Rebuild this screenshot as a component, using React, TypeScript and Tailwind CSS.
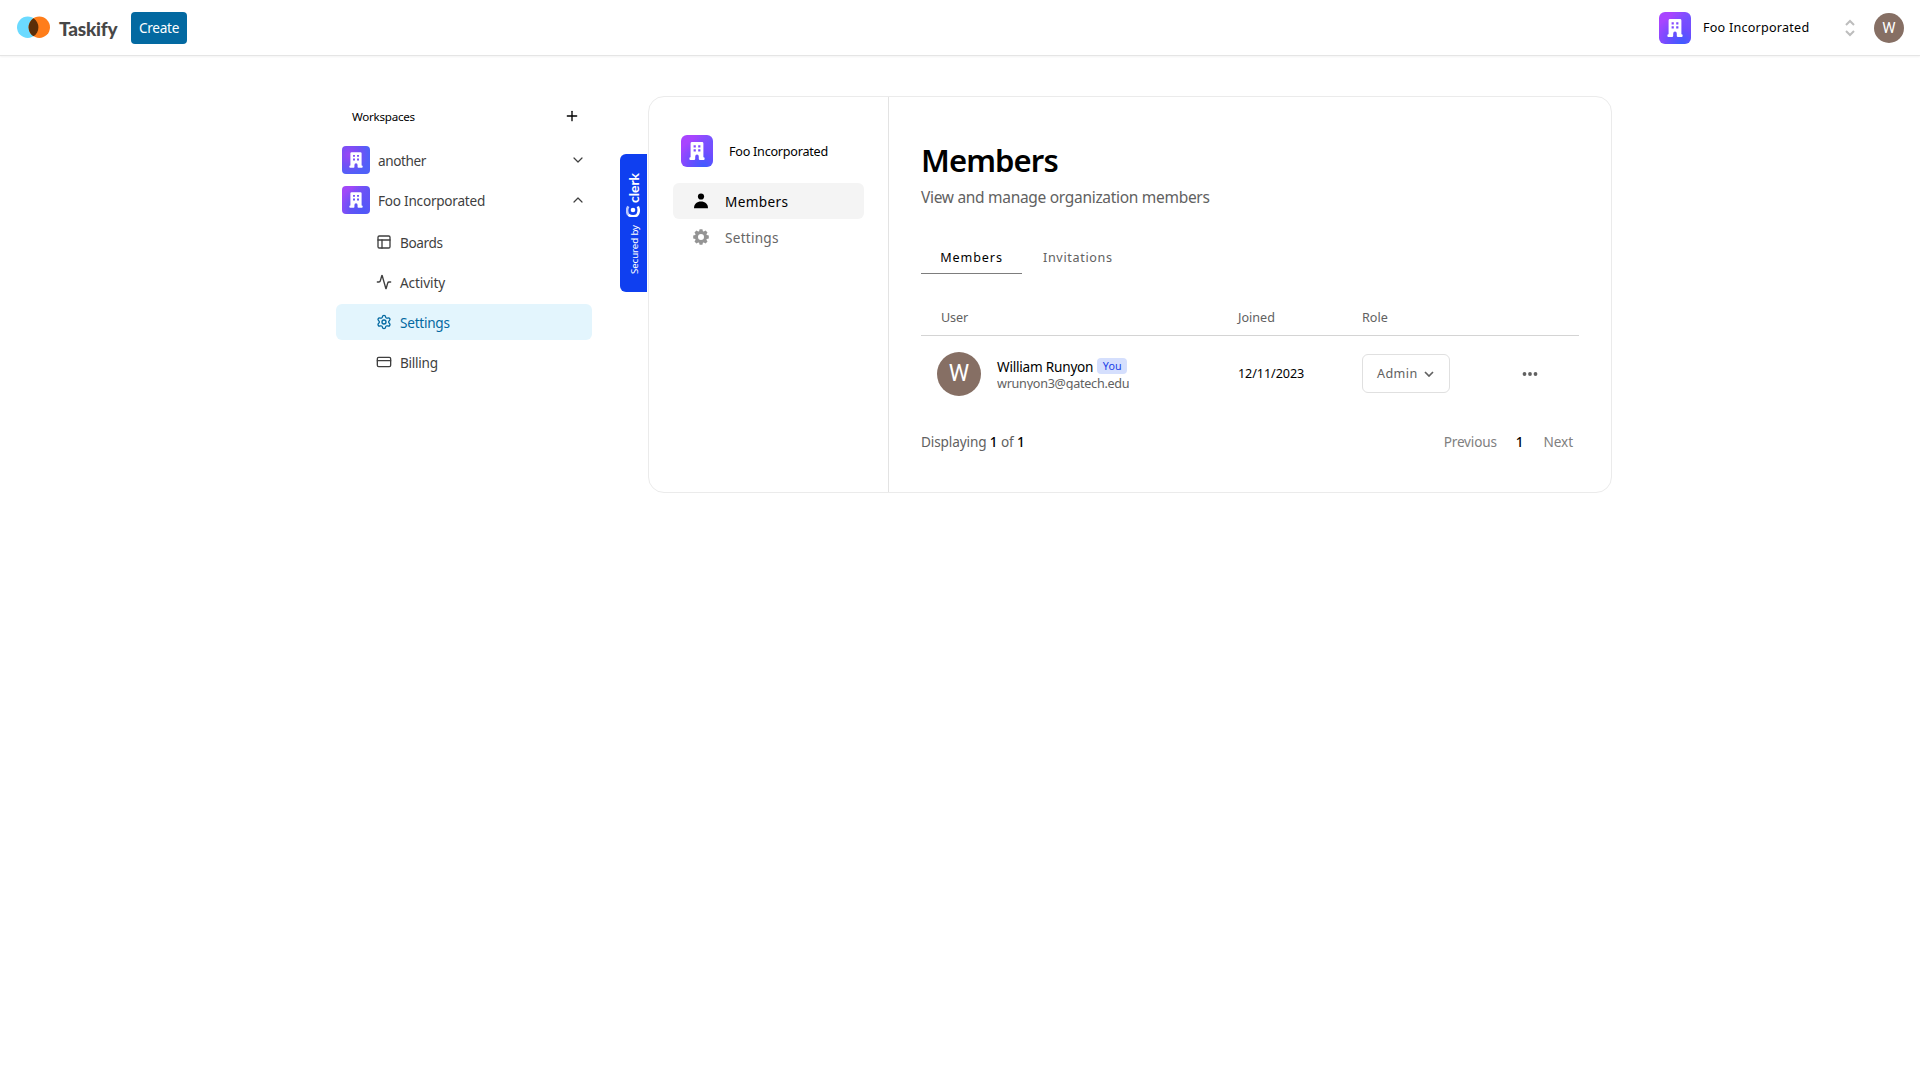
import React from 'react';
import { Activity, ChevronDown, ChevronUp, CreditCard, Layout, Plus, Settings } from 'lucide-react';

function Building({ className }: { className: string }) {
  return (
    <svg viewBox="0 0 16 18" className={className} fill="none">
      <path
        fill="#fff"
        fillRule="evenodd"
        d="M3 0h10q1.400 0 1.400 1.400V15.300h.3q.9 0 .9.9v.8q0 .9-.9.9h-4.100q-.8 0-.8-.8v-2.400Q9.800 12.600 8 12.600T6.200 14.700v2.400q0 .8-.8.8H1.300q-.9 0-.9-.9v-.8q0-.9.900-.9h.3V1.400Q1.600 0 3 0ZM4.600 3.200v2.200h2.200v-2.200ZM9.200 3.200v2.200h2.200v-2.200ZM4.600 7.300v2.200h2.200v-2.200ZM9.200 7.300v2.200h2.200v-2.200Z"
      />
    </svg>
  );
}

function OrgTile({ className, icon }: { className: string; icon: string }) {
  return (
    <div className={`flex shrink-0 items-center justify-center ${className}`}>
      <Building className={icon} />
    </div>
  );
}

const fooGradient =
  'bg-[radial-gradient(circle_at_70%_100%,#3d5cff_0%,#6a4dff_35%,transparent_75%),radial-gradient(circle_at_100%_20%,#6f55ff_0%,transparent_50%),linear-gradient(#a845ff,#a845ff)]';
const fooSmallGradient =
  'bg-[radial-gradient(circle_at_75%_90%,#4f58f8_0%,#6253f6_40%,transparent_80%),linear-gradient(90deg,#a048f8_35%,#5b57f5)]';
const anotherGradient =
  'bg-[radial-gradient(circle_at_25%_30%,#9a48f5_0%,#7350f5_38%,transparent_70%),linear-gradient(#5060f8,#5060f8)]';

function Navbar() {
  return (
    <header className="flex h-14 items-center border-b border-[#e5e5e5] bg-white px-4 shadow-xs">
      <svg viewBox="0 0 36 24" className="h-6 w-9">
        <circle cx="11.700" cy="11.300" r="10.700" fill="#6bdaff" />
        <circle cx="23.300" cy="11.300" r="10.700" fill="#ff7d1a" />
        <path d="M17.500 2.300a10.700 10.700 0 0 1 0 18 10.700 10.700 0 0 1 0-18Z" fill="#5c2e08" />
      </svg>
      <span className="mt-0.5 ml-[7px] w-[72px] font-['Lato'] text-[19px] leading-6 font-black tracking-[-0.2px] text-[#474747]">
        Taskify
      </span>
      <button className="h-8 w-14 rounded-[4px] bg-[#0369a1] pt-0.5 text-[13.6px] tracking-[-0.29px] text-white">
        Create
      </button>
      <div className="ml-auto flex items-center">
        <OrgTile className={`size-8 rounded-md ${fooGradient}`} icon="h-[18px] w-4" />
        <span className="mt-0.5 ml-3 w-[141px] text-[12.6px] tracking-[0.23px] text-black">Foo Incorporated</span>
        <svg viewBox="0 0 12 18" className="h-[18px] w-3" fill="none" stroke="#bdbdbd" strokeWidth="2">
          <path d="M2 6l4-4 4 4M2 12l4 4 4-4" />
        </svg>
        <div className="ml-[18px] flex size-[30px] items-center justify-center rounded-full bg-[#866f64] pt-px font-['Roboto'] text-[15px] text-white">
          W
        </div>
      </div>
    </header>
  );
}

const links = [
  { label: 'Boards', icon: Layout, track: 'tracking-[-0.39px]', active: false },
  { label: 'Activity', icon: Activity, track: 'tracking-[-0.1px]', active: false },
  { label: 'Settings', icon: Settings, track: 'tracking-[-0.25px]', active: true },
  { label: 'Billing', icon: CreditCard, track: 'tracking-[-0.26px]', active: false },
];

function Sidebar() {
  return (
    <nav className="w-64 text-[13.6px] text-[#3f3f3f]">
      <div className="flex h-10 items-center justify-between pr-3 pl-4">
        <span className="mt-px text-[11.6px] tracking-[-0.26px] text-black">Workspaces</span>
        <Plus className="size-4 text-black" />
      </div>
      <div className="mt-1 flex h-10 items-center px-1.5">
        <OrgTile className={`size-7 rounded-[4px] ${anotherGradient}`} icon="h-4 w-3.5" />
        <span className="mt-[3px] ml-2 flex-1 tracking-[-0.4px]">another</span>
        <ChevronDown className="size-4" strokeWidth={1.8} />
      </div>
      <div className="flex h-10 items-center px-1.5">
        <OrgTile className={`size-7 rounded-[4px] ${fooSmallGradient}`} icon="h-4 w-3.5" />
        <span className="mt-[3px] ml-2 flex-1 tracking-[-0.24px]">Foo Incorporated</span>
        <ChevronUp className="size-4" strokeWidth={1.8} />
      </div>
      <div className="mt-1 flex flex-col gap-1">
        {links.map(({ label, icon: Icon, track, active }) => (
          <div
            key={label}
            className={`flex h-9 items-center rounded-md pl-10 ${active ? 'bg-[#e3f5fd] text-[#0369a1]' : ''}`}
          >
            <Icon className="size-4" strokeWidth={2} />
            <span className={`mt-[3px] ml-2 ${track}`}>{label}</span>
          </div>
        ))}
      </div>
    </nav>
  );
}

function ClerkBadge() {
  return (
    <div className="mt-[58px] flex h-[138px] w-[27px] shrink-0 rotate-180 items-center rounded-r-md bg-[#0f3ff0] pt-[18px] text-white [writing-mode:vertical-rl]">
      <span className="mr-[3px] text-[9.7px] leading-3 tracking-[-0.09px]">Secured by</span>
      <svg viewBox="0 0 14 12" className="mt-2 h-3 w-3.5 rotate-180" fill="none" stroke="#fff">
        <path d="M2.300 1.300Q-.2 5.500 2.200 9.800" stroke="#b9c7ff" strokeWidth="2.600" />
        <path d="M2.300 9.700Q7 13 11.800 9.700M11.800 1.500q2 4-.2 8" strokeWidth="2.600" />
        <circle cx="7" cy="5" r="2.300" fill="#fff" stroke="none" />
      </svg>
      <span className="mt-0.5 font-['Lato'] text-[14px] leading-4 font-bold tracking-[-0.1px]">clerk</span>
    </div>
  );
}

function Profile() {
  return (
    <div className="flex h-[397px] w-[964px] rounded-2xl border border-[#ebebeb] bg-white">
      <aside className="w-[240px] shrink-0 border-r border-[#e3e3e3] px-6 pt-[38px]">
        <div className="flex h-8 items-center pl-2">
          <OrgTile className={`size-8 rounded-md ${fooGradient}`} icon="h-[18px] w-4" />
          <span className="mt-[3px] ml-4 text-[12.6px] tracking-[-0.24px] text-black">Foo Incorporated</span>
        </div>
        <div className="mt-4 flex h-9 items-center rounded-md bg-[#f4f4f4] pl-5 text-[13.6px] tracking-[0.36px] text-black">
          <svg viewBox="0 0 16 16" className="-mt-px size-4">
            <circle cx="8" cy="3.500" r="3.100" />
            <path d="M1 15.200C1 10.700 4 8.400 8 8.400s7 2.300 7 6.800Z" />
          </svg>
          <span className="mt-[3px] ml-4">Members</span>
        </div>
        <div className="flex h-9 items-center pl-5 text-[13.6px] tracking-[0.25px] text-[#666]">
          <svg viewBox="0 0 16 16" className="-mt-px size-4" fill="#949494">
            <path
              fillRule="evenodd"
              d="M6.600.2h2.800l.5 2 .9.400L12.600 1.500l1.900 1.900-1.100 1.800.4.900 2 .5v2.800l-2 .5-.4.900 1.100 1.800-1.900 1.900-1.800-1.100-.9.400-.5 2H6.600l-.5-2-.9-.4-1.800 1.100-1.900-1.900 1.100-1.800-.4-.9-2-.5V6.600l2-.5.4-.9L1.500 3.400l1.900-1.900 1.800 1.100.9-.4ZM8 5a3 3 0 1 0 0 6 3 3 0 0 0 0-6Z"
            />
          </svg>
          <span className="mt-[3px] ml-4">Settings</span>
        </div>
      </aside>
      <main className="flex-1 px-8 text-[#616161]">
        <h1 className="mt-[39px] h-12 text-[31px] leading-[48px] font-semibold tracking-[-0.88px] text-black">
          Members
        </h1>
        <p className="mt-px h-6 text-[15.5px] leading-6 tracking-[-0.3px]">View and manage organization members</p>
        <div className="mt-[29px] flex h-9 text-[12.6px] leading-[39px]">
          <div className="h-full w-[101px] border-b border-[#7d7d7d] text-center tracking-[0.9px] text-black">
            Members
          </div>
          <div className="ml-[21px] tracking-[0.65px]">Invitations</div>
        </div>
        <div className="mt-[26px] grid h-9 grid-cols-[317px_124px_1fr] border-b border-[#d4d4d4] text-[12.6px] leading-[36px]">
          <span className="pl-5 tracking-[-0.14px]">User</span>
          <span>Joined</span>
          <span className="tracking-[0.04px]">Role</span>
        </div>
        <div className="grid h-[75px] grid-cols-[317px_124px_144px_1fr] items-center">
          <div className="flex items-center pl-4">
            <div className="flex size-11 items-center justify-center rounded-full bg-[#866f64] pt-0.5 font-['Roboto'] text-[23px] text-white">
              W
            </div>
            <div className="mt-px ml-4">
              <div className="flex h-[17px] items-center">
                <span className="text-[13.6px] leading-[18px] tracking-[-0.22px] text-black">William Runyon</span>
                <span className="-mt-0.5 ml-1 h-4 w-[30px] rounded-[4px] bg-[#d5dffd] text-center text-[10.7px] leading-[17px] tracking-[0.1px] text-[#1a3fe8]">
                  You
                </span>
              </div>
              <div className="h-[15px] overflow-hidden text-[12.6px] leading-[17px] tracking-[-0.26px]">
                wrunyon3@gatech.edu
              </div>
            </div>
          </div>
          <span className="mt-0.5 text-[12.6px] tracking-[-0.08px] text-black">12/11/2023</span>
          <button className="flex h-[39px] w-[88px] items-center rounded-md border border-[#e0e0e0] pl-3.5 text-[12.6px] tracking-[0.4px]">
            <span className="mt-0.5">Admin</span>
            <svg viewBox="0 0 10 6" className="ml-1.5 h-1.5 w-2.5" fill="none" stroke="#616161" strokeWidth="1.700">
              <path d="M1 1l4 4 4-4" />
            </svg>
          </button>
          <svg viewBox="0 0 16 4" className="ml-4 h-1 w-4" fill="#616161">
            <circle cx="2.500" cy="2" r="1.900" />
            <circle cx="8" cy="2" r="1.900" />
            <circle cx="13.500" cy="2" r="1.900" />
          </svg>
        </div>
        <div className="mt-[21px] flex h-5 items-center text-[13.6px] leading-5">
          <span className="tracking-[-0.12px]">
            Displaying <b className="font-medium text-black">1</b> of <b className="font-medium text-black">1</b>
          </span>
          <span className="ml-auto tracking-[-0.18px] text-[#808080]">Previous</span>
          <span className="ml-[19px] font-medium text-black">1</span>
          <span className="mr-1.5 ml-5 tracking-[-0.1px] text-[#808080]">Next</span>
        </div>
      </main>
    </div>
  );
}

export default function App() {
  return (
    <div className="h-screen w-screen overflow-hidden bg-white font-['Noto_Sans',sans-serif]">
      <Navbar />
      <div className="mt-10 flex pl-[336px]">
        <Sidebar />
        <div className="ml-7 flex items-start">
          <ClerkBadge />
          <div className="ml-px">
            <Profile />
          </div>
        </div>
      </div>
    </div>
  );
}
